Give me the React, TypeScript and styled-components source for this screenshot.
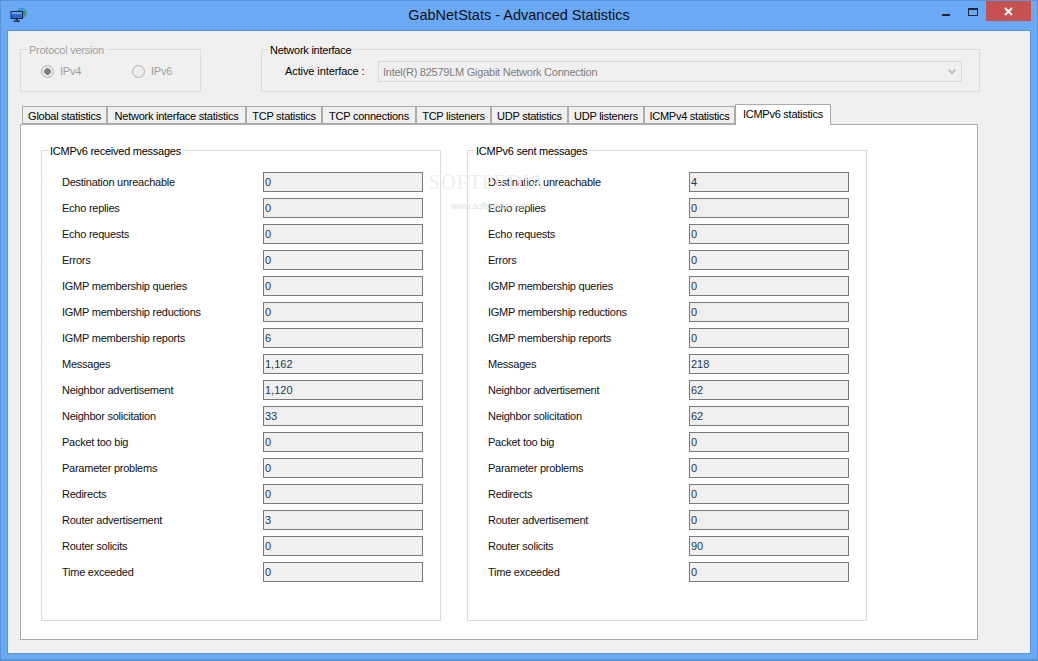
import styled, { createGlobalStyle } from "styled-components";

const GlobalStyle = createGlobalStyle`
  html, body {
    margin: 0;
    padding: 0;
    background: #69a9f5;
  }
  * {
    box-sizing: border-box;
  }
`;

const tabs = [
  { label: "Global statistics", width: 85 },
  { label: "Network interface statistics", width: 139 },
  { label: "TCP statistics", width: 76 },
  { label: "TCP connections", width: 94 },
  { label: "TCP listeners", width: 75 },
  { label: "UDP statistics", width: 77 },
  { label: "UDP listeners", width: 76 },
  { label: "ICMPv4 statistics", width: 91 },
];

const labels = [
  "Destination unreachable",
  "Echo replies",
  "Echo requests",
  "Errors",
  "IGMP membership queries",
  "IGMP membership reductions",
  "IGMP membership reports",
  "Messages",
  "Neighbor advertisement",
  "Neighbor solicitation",
  "Packet too big",
  "Parameter problems",
  "Redirects",
  "Router advertisement",
  "Router solicits",
  "Time exceeded",
];

const received = ["0", "0", "0", "0", "0", "0", "6", "1,162", "1,120", "33", "0", "0", "0", "3", "0", "0"];
const sent = ["4", "0", "0", "0", "0", "0", "0", "218", "62", "62", "0", "0", "0", "0", "90", "0"];

const StatsGroup = ({ title, values }: { title: string; values: string[] }) => (
  <Group>
    <StatsTitle>{title}</StatsTitle>
    {labels.map((label, i) => (
      <Row key={label}>
        <RowLabel>{label}</RowLabel>
        <ValueBox>{values[i]}</ValueBox>
      </Row>
    ))}
  </Group>
);

const App = () => {
  return (
    <Window>
      <GlobalStyle />
      <TitleBar>
        <AppIcon width="18" height="16" viewBox="0 0 18 16">
          <circle cx="11.5" cy="6" r="5.2" fill="#3f9f62" />
          <path d="M8 2.2c2-2 5.5-2 7 .2-.6 1.6-2.4 1-3 2.2-1.600.2-3.400-.8-4-2.400z" fill="#3b93e2" />
          <rect x="0.5" y="4" width="12.500" height="8" fill="#10264c" />
          <rect x="1.500" y="5" width="10.500" height="6" fill="#2a66cf" />
          <rect x="1.500" y="5" width="10.500" height="2.200" fill="#6b9fe8" />
          <rect x="5.500" y="12" width="2.500" height="1.500" fill="#1c2a3c" />
          <rect x="3.500" y="13.500" width="6.500" height="1.300" fill="#1c2a3c" />
        </AppIcon>
        <Title>GabNetStats - Advanced Statistics</Title>
        <Controls>
          <MinimizeButton />
          <MaximizeButton />
          <CloseButton>
            <svg width="9" height="9" viewBox="0 0 9 9">
              <path d="M1 1l7 7M8 1L1 8" stroke="#fff" strokeWidth="2" />
            </svg>
          </CloseButton>
        </Controls>
      </TitleBar>

      <Client>
        <TopRow>
          <ProtocolGroup>
            <DisabledTitle>Protocol version</DisabledTitle>
            <RadioRow>
              <RadioItem>
                <Radio $checked />
                <span>IPv4</span>
              </RadioItem>
              <RadioItem>
                <Radio />
                <span>IPv6</span>
              </RadioItem>
            </RadioRow>
          </ProtocolGroup>
          <InterfaceGroup>
            <GroupTitle>Network interface</GroupTitle>
            <InterfaceRow>
              <InterfaceLabel>Active interface :</InterfaceLabel>
              <ComboBox>
                <span>Intel(R) 82579LM Gigabit Network Connection</span>
                <svg width="10" height="8" viewBox="0 0 10 8">
                  <path d="M1.500 1.500L5 5l3.500-3.500" fill="none" stroke="#c4c4c4" strokeWidth="2.400" />
                </svg>
              </ComboBox>
            </InterfaceRow>
          </InterfaceGroup>
        </TopRow>

        <TabStrip>
          {tabs.map((tab) => (
            <Tab key={tab.label} $width={tab.width}>
              {tab.label}
            </Tab>
          ))}
          <ActiveTab>ICMPv6 statistics</ActiveTab>
        </TabStrip>

        <TabPanel>
          <StatsGroup title="ICMPv6 received messages" values={received} />
          <StatsGroup title="ICMPv6 sent messages" values={sent} />
          <Watermark>
            <WatermarkName>SOFTPEDIA</WatermarkName>
            <WatermarkUrl>www.softpedia.com</WatermarkUrl>
          </Watermark>
        </TabPanel>
      </Client>
    </Window>
  );
};

const Window = styled.div`
  width: 1038px;
  height: 661px;
  background: #69a9f5;
  border: 1px solid #5b93d6;
  border-bottom-width: 2px;
  display: flex;
  flex-direction: column;
  overflow: hidden;
  font-family: "Liberation Sans", Arial, sans-serif;
  font-size: 11px;
  letter-spacing: -0.25px;
  color: #000;
`;

const TitleBar = styled.div`
  height: 29px;
  flex: none;
  display: grid;
  grid-template-columns: 1fr auto 1fr;
  align-items: start;
`;

const AppIcon = styled.svg`
  margin: 6px 0 0 9px;
`;

const Title = styled.div`
  font-size: 14.5px;
  line-height: 29px;
  letter-spacing: 0;
  color: #111;
`;

const Controls = styled.div`
  display: flex;
  justify-content: flex-end;
  align-items: flex-start;
  margin-right: 6px;
`;

const MinimizeButton = styled.div`
  width: 8px;
  height: 2px;
  background: #1d2530;
  margin: 13px 18px 0 0;
`;

const MaximizeButton = styled.div`
  width: 10px;
  height: 8px;
  border: 1px solid #1d2530;
  border-top-width: 2px;
  margin: 7px 8px 0 0;
`;

const CloseButton = styled.div`
  width: 45px;
  height: 20px;
  background: #c75050;
  display: flex;
  align-items: center;
  justify-content: center;
`;

const Client = styled.div`
  width: 1024px;
  height: 624px;
  margin-left: 6px;
  background: #f0f0f0;
  border: 1px solid #5b93d6;
  padding: 18px 0 0 12px;
`;

const TopRow = styled.div`
  display: flex;
  gap: 60px;
`;

const Fieldset = styled.fieldset`
  margin: 0;
  padding: 0;
  border: 1px solid #dcdcdc;
  min-width: 0;
`;

const ProtocolGroup = styled(Fieldset)`
  width: 181px;
  height: 50px;
  margin-top: -7px;
`;

const InterfaceGroup = styled(Fieldset)`
  width: 719px;
  height: 50px;
  margin-top: -7px;
`;

const GroupTitle = styled.legend`
  margin-left: 6px;
  padding: 2px 2px 0;
  line-height: 13px;
`;

const StatsTitle = styled(GroupTitle)`
  margin-left: -14px;
`;

const DisabledTitle = styled(GroupTitle)`
  color: #a0a0a0;
`;

const RadioRow = styled.div`
  display: flex;
  padding: 7px 0 0 20px;
  color: #a0a0a0;
`;

const RadioItem = styled.div`
  display: flex;
  flex: none;
  align-items: center;
  gap: 6px;
  width: 91px;
  height: 14px;
`;

const Radio = styled.div<{ $checked?: boolean }>`
  width: 13px;
  height: 13px;
  border-radius: 50%;
  border: 1px solid #b4b4b4;
  background: ${(p) =>
    p.$checked
      ? "radial-gradient(circle, #7d7d7d 0 3px, #e8e8e8 3.6px)"
      : "#ececec"};
`;

const InterfaceRow = styled.div`
  display: flex;
  align-items: center;
  padding: 0 17px 0 23px;
  height: 21px;
  margin-top: 4px;
`;

const InterfaceLabel = styled.div`
  width: 93px;
  flex: none;
  padding-bottom: 2px;
  letter-spacing: -0.1px;
`;

const ComboBox = styled.div`
  flex: 1;
  height: 21px;
  border: 1px solid #d9d9d9;
  display: flex;
  align-items: center;
  justify-content: space-between;
  padding: 0 4px;
  color: #7d7d7d;
`;

const TabStrip = styled.div`
  display: flex;
  align-items: flex-end;
  height: 20px;
  margin-top: 12px;
  padding-left: 2px;
  position: relative;
  z-index: 1;
`;

const Tab = styled.div<{ $width: number }>`
  width: ${(p) => p.$width}px;
  height: 18px;
  flex: none;
  display: flex;
  align-items: center;
  justify-content: center;
  padding-top: 1px;
  background: #f0f0f0;
  border: 1px solid #acacac;
  margin-right: -1px;
  &:not(:first-child) {
    margin-left: 1px;
  }
`;

const ActiveTab = styled.div`
  width: 96px;
  height: 21px;
  flex: none;
  margin: 0 0 -1px 1px;
  display: flex;
  align-items: center;
  justify-content: center;
  padding-bottom: 2px;
  background: #fff;
  border: 1px solid #acacac;
  border-bottom: none;
`;

const TabPanel = styled.div`
  position: relative;
  width: 958px;
  height: 516px;
  background: #fff;
  border: 1px solid #acacac;
  display: flex;
  gap: 26px;
  padding: 18px 0 0 20px;
`;

const Group = styled(Fieldset)`
  width: 400px;
  height: 478px;
  padding: 14px 0 0 20px;
`;

const Row = styled.div`
  display: flex;
  align-items: center;
  height: 20px;
  margin-bottom: 6px;
`;

const RowLabel = styled.div`
  width: 201px;
  flex: none;
  color: #111;
`;

const ValueBox = styled.div`
  width: 160px;
  height: 20px;
  background: #f0f0f0;
  border: 1px solid #7a7a7a;
  padding-left: 1px;
  line-height: 18px;
  letter-spacing: 0;
  color: #1f3a50;
`;

const Watermark = styled.div`
  position: absolute;
  left: 408px;
  top: 46px;
  width: 112px;
  pointer-events: none;
  text-align: center;
`;

const WatermarkName = styled.div`
  font-family: "Liberation Serif", serif;
  font-size: 20px;
  letter-spacing: 1px;
  white-space: nowrap;
  line-height: 22px;
  color: #eeeeee;
`;

const WatermarkUrl = styled.div`
  font-size: 9px;
  letter-spacing: 0;
  margin-top: 8px;
  padding-left: 10px;
  color: #dedede;
  white-space: nowrap;
`;

export default App;
